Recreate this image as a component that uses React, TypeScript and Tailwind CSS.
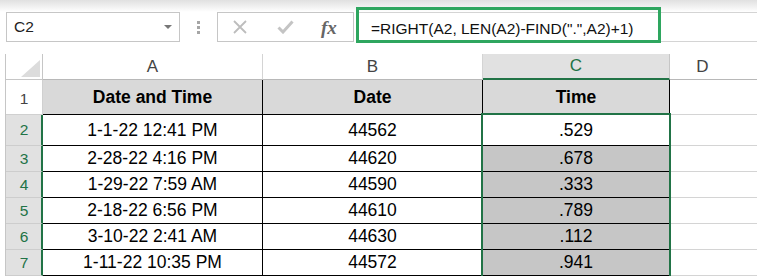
import React from 'react';

const rows = [
  { n: 2, dt: '1-1-22 12:41 PM', d: '44562', t: '.529', h: 'h-[31px]' },
  { n: 3, dt: '2-28-22 4:16 PM', d: '44620', t: '.678', h: 'h-[26px]' },
  { n: 4, dt: '1-29-22 7:59 AM', d: '44590', t: '.333', h: 'h-[26px]' },
  { n: 5, dt: '2-18-22 6:56 PM', d: '44610', t: '.789', h: 'h-[26px]' },
  { n: 6, dt: '3-10-22 2:41 AM', d: '44630', t: '.112', h: 'h-[26px]' },
  { n: 7, dt: '1-11-22 10:35 PM', d: '44572', t: '.941', h: 'h-[26px]' },
];

function FormulaBar() {
  return (
    <div className="flex h-[30px] pl-[6px]">
      {/* Name box */}
      <div className="w-[174px] border border-[#c6c6c6] flex items-center justify-between pl-[7px] pr-[7px] text-[15.5px] text-[#222]">
        <span>C2</span>
        <svg width="8" height="4" viewBox="0 0 8 4">
          <polygon points="0,0 8,0 4,4" fill="#777" />
        </svg>
      </div>

      {/* Splitter dots */}
      <div className="w-[37px] flex flex-col items-center justify-center gap-[2px]">
        <div className="w-[3px] h-[3px] bg-[#a6a6a6]" />
        <div className="w-[3px] h-[3px] bg-[#a6a6a6]" />
        <div className="w-[3px] h-[3px] bg-[#a6a6a6]" />
      </div>

      {/* Cancel / enter / fx */}
      <div className="w-[137px] border border-[#c6c6c6] flex items-center pl-[15px]">
        <svg width="14" height="14" viewBox="0 0 14 14">
          <path d="M1 1 L13 13 M13 1 L1 13" stroke="#bdbdbd" strokeWidth="1.8" />
        </svg>
        <svg width="17" height="14" viewBox="0 0 17 14" className="ml-[30px]">
          <polyline points="1.5,7.5 6,12 15.5,1.5" fill="none" stroke="#c4c4c4" strokeWidth="3" />
        </svg>
        <span className="ml-[27px] font-['Liberation_Serif',serif] italic font-bold text-[19px] leading-none text-[#666]">
          fx
        </span>
      </div>

      {/* Formula input */}
      <div className="ml-[2px] flex-1 relative border-y border-[#d4d4d4] flex items-center pl-[15px] pt-[3px] text-[15.5px] text-[#111]">
        <div className="absolute left-0 top-[-6px] w-[305px] h-[36px] border-[3px] border-[#2ea65f]" />
        <span>=RIGHT(A2, LEN(A2)-FIND(".",A2)+1)</span>
      </div>
    </div>
  );
}

function Sheet() {
  return (
    <div className="ml-[5px] border-l border-[#c6c6c6] flex flex-col relative">
      {/* Column headers */}
      <div className="flex h-[26px] text-[17px] text-[#444]">
        <div className="w-[37px] border-r border-b border-[#c6c6c6] flex items-end justify-end pr-[2px] pb-[2px]">
          <svg width="19" height="17" viewBox="0 0 19 17">
            <polygon points="19,0 19,17 0,17" fill="#dcdcdc" />
          </svg>
        </div>
        <div className="w-[220px] border-r border-r-[#d4d4d4] border-b border-b-[#b8b8b8] flex items-center justify-center">A</div>
        <div className="w-[220px] border-r border-r-[#d4d4d4] border-b border-b-[#b8b8b8] flex items-center justify-center">B</div>
        <div className="w-[187px] bg-[#e1e1e1] border-r border-r-[#c6c6c6] border-b-2 border-b-[#217346] flex items-center justify-center text-[#217346]">C</div>
        <div className="flex-1 border-b border-b-[#b8b8b8] flex items-center justify-center">
          <span className="-ml-[22px]">D</span>
        </div>
      </div>

      {/* Row 1 */}
      <div className="flex h-[35px] text-[17.5px]">
        <div className="w-[37px] border-r border-b border-[#d0d0d0] flex items-center justify-center text-[15.5px] text-[#444] pt-[3px]">1</div>
        <div className="w-[220px] bg-[#d9d9d9] border-r border-b border-black flex items-center justify-center font-bold">Date and Time</div>
        <div className="w-[220px] bg-[#d9d9d9] border-r border-b border-black flex items-center justify-center font-bold">Date</div>
        <div className="w-[187px] bg-[#d9d9d9] border-r border-b border-black flex items-center justify-center font-bold">Time</div>
        <div className="flex-1 border-b border-[#d4d4d4]" />
      </div>

      {/* Data rows */}
      {rows.map((r) => (
        <div key={r.n} className={`flex ${r.h} text-[17.5px]`}>
          <div className="w-[37px] bg-[#e1e1e1] border-r-2 border-r-[#217346] border-b border-b-[#cdcdcd] flex items-center justify-center text-[15.5px] text-[#217346] pl-[1px]">
            {r.n}
          </div>
          <div className="w-[220px] border-r border-b border-black flex items-center justify-center">{r.dt}</div>
          <div className="w-[220px] border-r border-b border-black flex items-center justify-center">{r.d}</div>
          <div className={`w-[187px] border-r border-b border-black flex items-center justify-center ${r.n === 2 ? 'bg-white' : 'bg-[#c6c6c6]'}`}>
            {r.t}
          </div>
          <div className="flex-1 border-b border-[#d4d4d4]" />
        </div>
      ))}

      {/* Selection C2:C7 */}
      <div className="absolute left-[475px] top-[59px] w-[190px] h-[180px] border-2 border-[#217346] pointer-events-none" />
    </div>
  );
}

export default function App() {
  return (
    <div className="w-[757px] h-[276px] overflow-hidden bg-white text-black font-['Liberation_Sans',Arial,sans-serif]">
      <div className="h-[12px] bg-gradient-to-b from-[#e0e0e0] to-white" />
      <FormulaBar />
      <div className="h-[12px]" />
      <Sheet />
    </div>
  );
}
